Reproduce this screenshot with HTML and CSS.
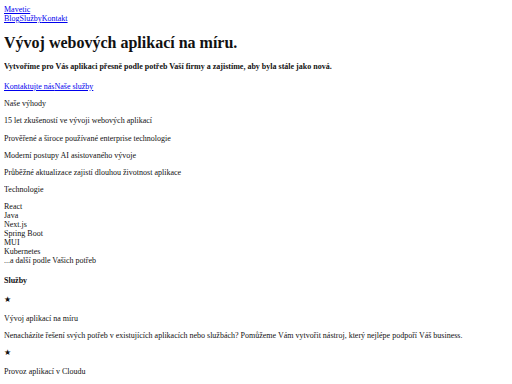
FILE: index.html
```html
<!DOCTYPE html>
<html lang="cs">
<head>
<meta charset="utf-8">
<title>Mavetic</title>
<link rel="stylesheet" href="styles.css">
</head>
<body>
<header class="site-header">
  <div><a href="#">Mavetic</a></div>
  <nav class="nav"><a href="#">Blog</a><a href="#">Služby</a><a href="#">Kontakt</a></nav>
</header>
<main>
  <section class="hero">
    <h1 class="title">Vývoj webových aplikací na míru.</h1>
    <h4 class="lead">Vytvoříme pro Vás aplikaci přesně podle potřeb Vaší firmy a zajistíme, aby byla stále jako nová.</h4>
    <div class="cta"><a href="#">Kontaktujte nás</a><a href="#">Naše služby</a></div>
  </section>
  <section class="benefits">
    <p>Naše výhody</p>
    <p>15 let zkušeností ve vývoji webových aplikací</p>
    <p>Prověřené a široce používané enterprise technologie</p>
    <p>Moderní postupy AI asistovaného vývoje</p>
    <p>Průběžné aktualizace zajistí dlouhou životnost aplikace</p>
  </section>
  <section class="tech">
    <p>Technologie</p>
    <div>React</div>
    <div>Java</div>
    <div>Next.js</div>
    <div>Spring Boot</div>
    <div>MUI</div>
    <div>Kubernetes</div>
    <div>...a další podle Vašich potřeb</div>
  </section>
  <section class="services">
    <h4 class="section-title">Služby</h4>
    <div class="service">
      <p class="icon">★</p>
      <p>Vývoj aplikací na míru</p>
      <p>Nenacházíte řešení svých potřeb v existujících aplikacích nebo službách? Pomůžeme Vám vytvořit nástroj, který nejlépe podpoří Váš business.</p>
    </div>
    <div class="service">
      <p class="icon">★</p>
      <p>Provoz aplikací v Cloudu</p>
      <p>Vaše aplikace poběží na spolehlivé a bezpečné cloudové infrastruktuře, o kterou se postaráme za Vás i po jejím spuštění.</p>
    </div>
  </section>
</main>
</body>
</html>
```

FILE: styles.css
```css
html {
  background: #fff;
}
body {
  margin: 5px 4px 4px;
  font-family: "Liberation Serif", "Times New Roman", serif;
  font-size: 8px;
  color: #111;
}
a {
  color: #0000ee;
}
.title {
  font-size: 2em;
  margin: 0.67em 0;
}
.lead,
.section-title {
  font-size: 1em;
  margin: 1.33em 0;
}
.cta {
  margin: 0;
}
p {
  margin: 1.02em 0;
}
.icon {
  line-height: 10.5px;
}
```
